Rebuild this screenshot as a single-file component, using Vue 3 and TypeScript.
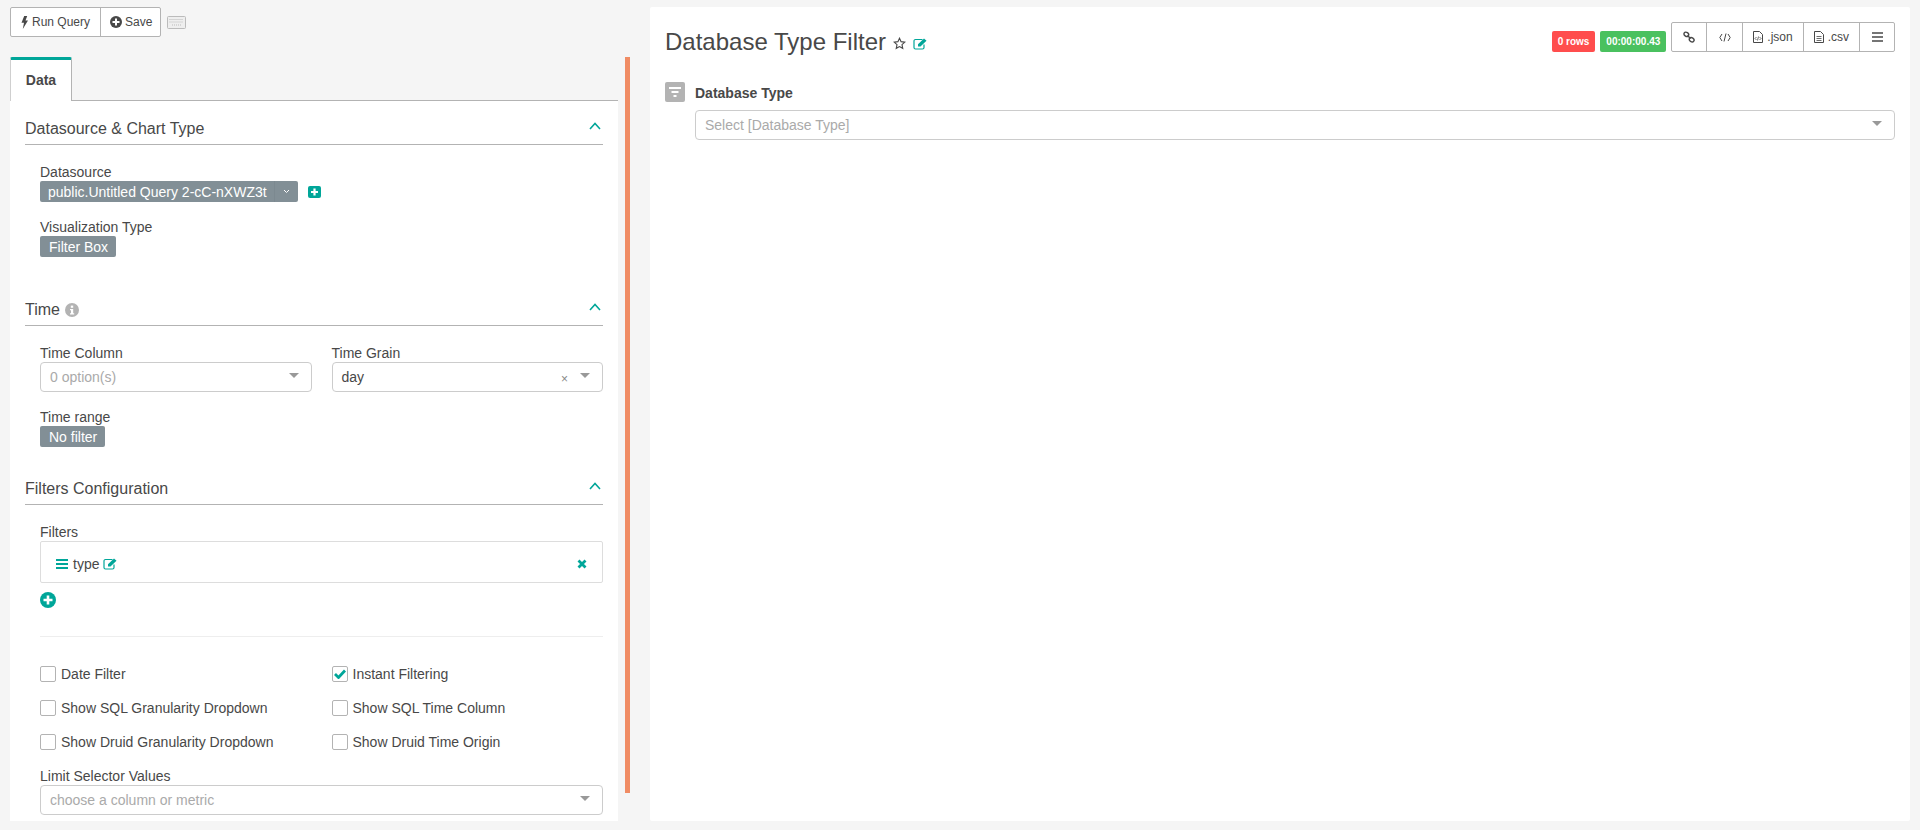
<script setup lang="ts">
const checks = [
  { label: 'Date Filter', checked: false },
  { label: 'Instant Filtering', checked: true },
  { label: 'Show SQL Granularity Dropdown', checked: false },
  { label: 'Show SQL Time Column', checked: false },
  { label: 'Show Druid Granularity Dropdown', checked: false },
  { label: 'Show Druid Time Origin', checked: false },
]
</script>

<template>
  <div class="page">
    <div class="left">
      <div class="toolbar">
        <div class="btn-group">
          <button class="btn run">
            <svg width="7" height="13" viewBox="0 0 7 13"><path d="M3.200 0H6.200L4.500 4.500H7L1.800 13 3 6.800H.5z" fill="#484848" /></svg>
            Run Query
          </button>
          <button class="btn save">
            <svg width="12" height="12" viewBox="0 0 12 12"><circle cx="6" cy="6" r="6" fill="#484848" /><path d="M6 2.500v7M2.500 6h7" stroke="#fff" stroke-width="2" /></svg>
            Save
          </button>
        </div>
        <svg class="kbd" width="19" height="13" viewBox="0 0 19 13"><rect x=".5" y=".5" width="18" height="12" rx="1" fill="#eee" stroke="#bbb" /><path d="M2.500 3.500h14M2.500 6h14M5 9h9" stroke="#bbb" stroke-dasharray="1 1" /></svg>
      </div>
      <div class="control-wrap">
        <div class="panel">
          <div class="tabs"><div class="tab">Data</div></div>
          <div class="tab-body">
            <section>
              <header class="sec-head">
                <span>Datasource &amp; Chart Type</span>
                <svg class="chev" width="12" height="8" viewBox="0 0 12 8"><path d="M1 7l5-5.500L11 7" fill="none" stroke="#00a699" stroke-width="1.600" /></svg>
              </header>
              <div class="sec-body">
                <label class="lbl">Datasource</label>
                <div class="row-inline">
                  <span class="lab-tag wide">
                    <span>public.Untitled Query 2-cC-nXWZ3t</span>
                    <span class="tag-caret">
                      <svg width="7" height="5" viewBox="0 0 7 5"><path d="M1 1l2.500 2.500L6 1" fill="none" stroke="#fff" /></svg>
                    </span>
                  </span>
                  <svg class="plus-sq" width="13" height="12" viewBox="0 0 13 12"><rect width="13" height="12" rx="2" fill="#00a699" /><path d="M6.500 2.500v7M3 6h7" stroke="#fff" stroke-width="2.200" /></svg>
                </div>
                <label class="lbl second">Visualization Type</label>
                <span class="lab-tag">Filter Box</span>
              </div>
            </section>

            <section class="time-sec">
              <header class="sec-head">
                <span class="head-with-icon">Time
                  <svg width="14" height="14" viewBox="0 0 14 14"><circle cx="7" cy="7" r="7" fill="#b3b3b3" /><rect x="5.800" y="2.600" width="2.400" height="2.200" fill="#fff" /><path d="M5 6h3.200v4.200H9.200v1.200H5v-1.200h1V7.200H5z" fill="#fff" /></svg>
                </span>
                <svg class="chev" width="12" height="8" viewBox="0 0 12 8"><path d="M1 7l5-5.500L11 7" fill="none" stroke="#00a699" stroke-width="1.600" /></svg>
              </header>
              <div class="sec-body">
                <div class="two">
                  <div>
                    <label class="lbl">Time Column</label>
                    <div class="select"><span class="ph">0 option(s)</span><i class="caret"></i></div>
                  </div>
                  <div>
                    <label class="lbl">Time Grain</label>
                    <div class="select"><span>day</span><span class="clear">×</span><i class="caret"></i></div>
                  </div>
                </div>
                <label class="lbl third">Time range</label>
                <span class="lab-tag">No filter</span>
              </div>
            </section>

            <section class="filter-sec">
              <header class="sec-head">
                <span>Filters Configuration</span>
                <svg class="chev" width="12" height="8" viewBox="0 0 12 8"><path d="M1 7l5-5.500L11 7" fill="none" stroke="#00a699" stroke-width="1.600" /></svg>
              </header>
              <div class="sec-body">
                <label class="lbl">Filters</label>
                <div class="filter-row">
                  <svg width="12" height="10" viewBox="0 0 12 10"><path d="M0 1h12M0 5h12M0 9h12" stroke="#00a699" stroke-width="2" /></svg>
                  <span class="type">type</span>
                  <svg width="14" height="12" viewBox="0 0 14 12"><path d="M9.500 1.500H2.500A1.500 1.500 0 0 0 1 3v6.500A1.500 1.500 0 0 0 2.500 11h7A1.500 1.500 0 0 0 11 9.500V6.500" fill="none" stroke="#00a699" stroke-width="1.200" /><path d="M5 6.300L11 .5 13.500 2.800 7.500 8.500H5z" fill="#00a699" /></svg>
                  <svg class="x" width="10" height="10" viewBox="0 0 10 10"><path d="M1.500 1.500l7 7M8.500 1.500l-7 7" stroke="#00a699" stroke-width="2.800" /></svg>
                </div>
                <svg class="add" width="16" height="16" viewBox="0 0 16 16"><circle cx="8" cy="8" r="8" fill="#00a699" /><path d="M8 3.500v9M3.500 8h9" stroke="#fff" stroke-width="2.600" /></svg>
                <hr class="sep" />
                <div class="checks">
                  <div v-for="c in checks" :key="c.label" class="check">
                    <span class="box">
                      <svg v-if="c.checked" width="12" height="10" viewBox="0 0 12 10"><path d="M1 5l3.500 3.500L11 1.500" fill="none" stroke="#00a699" stroke-width="2.800" /></svg>
                    </span>
                    <span>{{ c.label }}</span>
                  </div>
                </div>
                <label class="lbl limit">Limit Selector Values</label>
                <div class="select"><span class="ph">choose a column or metric</span><i class="caret"></i></div>
              </div>
            </section>
          </div>
        </div>
        <div class="scrollbar"></div>
      </div>
    </div>

    <div class="right">
      <div class="chart-head">
        <h1 class="title">Database Type Filter</h1>
        <svg class="star" width="13" height="13" viewBox="0 0 14 14"><path d="M7 1.300l1.700 3.700 4 .5-3 2.700.8 4L7 10.300l-3.500 1.900.8-4-3-2.700 4-.5z" fill="none" stroke="#484848" stroke-width="1.200" /></svg>
        <svg class="edit" width="14" height="12" viewBox="0 0 14 12"><path d="M9.500 1.500H2.500A1.500 1.500 0 0 0 1 3v6.500A1.500 1.500 0 0 0 2.500 11h7A1.500 1.500 0 0 0 11 9.500V6.500" fill="none" stroke="#00a699" stroke-width="1.200" /><path d="M5 6.300L11 .5 13.500 2.800 7.500 8.500H5z" fill="#00a699" /></svg>
        <div class="head-right">
          <span class="badge red">0 rows</span>
          <span class="badge green">00:00:00.43</span>
          <div class="btn-group">
            <button class="btn sm">
              <svg width="12" height="12" viewBox="0 0 12 12"><g fill="none" stroke="#484848" stroke-width="1.400"><ellipse cx="3.300" cy="3.300" rx="2.500" ry="2" transform="rotate(35 3.300 3.300)" /><ellipse cx="8.700" cy="8.700" rx="2.500" ry="2" transform="rotate(35 8.700 8.700)" /><path d="M4.500 4.500l3 3" /></g></svg>
            </button>
            <button class="btn sm code">
              <svg width="12" height="9" viewBox="0 0 12 9"><path d="M3 1L.8 4.500 3 8M9 1l2.200 3.500L9 8M7 .5L5 8.500" fill="none" stroke="#484848" /></svg>
            </button>
            <button class="btn sm">
              <svg width="10" height="12" viewBox="0 0 10 12"><path d="M.5.500h6l3 3v8H.5z" fill="none" stroke="#484848" /><path d="M3.500 6L2 7.500 3.500 9M6.500 6L8 7.500 6.500 9M5.500 5.500l-1 4" fill="none" stroke="#484848" stroke-width=".8" /></svg>
              .json
            </button>
            <button class="btn sm">
              <svg width="10" height="12" viewBox="0 0 10 12"><path d="M.5.500h6l3 3v8H.5z" fill="none" stroke="#484848" /><path d="M2.500 5.500h5M2.500 7.500h5M2.500 9.500h5" stroke="#484848" stroke-width=".8" /></svg>
              .csv
            </button>
            <button class="btn sm menu">
              <svg width="11" height="10" viewBox="0 0 11 10"><path d="M0 1h11M0 5h11M0 9h11" stroke="#484848" stroke-width="1.600" /></svg>
            </button>
          </div>
        </div>
      </div>
      <div class="filter-box">
        <span class="filter-icon">
          <svg width="12" height="10" viewBox="0 0 12 10"><path d="M0 1h12M2.500 5h7M4.500 9h3" stroke="#fff" stroke-width="2" /></svg>
        </span>
        <div class="filter-main">
          <div class="filter-name">Database Type</div>
          <div class="select"><span class="ph">Select [Database Type]</span><i class="caret"></i></div>
        </div>
      </div>
    </div>
  </div>
</template>

<style>
html,
body {
  margin: 0;
  background: #f5f5f5;
}
</style>

<style scoped>
.page {
  display: flex;
  height: 830px;
  overflow: hidden;
  box-sizing: border-box;
  padding: 7px 0 9px 10px;
  background: #f5f5f5;
  font-family: "Liberation Sans", Arial, sans-serif;
  font-size: 14px;
  color: #484848;
}
.left {
  width: 620px;
  flex: none;
  display: flex;
  flex-direction: column;
}
.toolbar {
  display: flex;
  align-items: center;
  height: 30px;
  margin-bottom: 20px;
  flex: none;
}
.btn-group {
  display: inline-flex;
  border: 1px solid #b3b3b3;
  border-radius: 2px;
  background: #fff;
}
.btn {
  display: inline-flex;
  align-items: center;
  justify-content: center;
  gap: 4px;
  height: 28px;
  padding: 0 10px;
  border: 0;
  border-right: 1px solid #b3b3b3;
  background: transparent;
  color: #484848;
  font: inherit;
  font-size: 12px;
}
.btn:last-child {
  border-right: 0;
}
.save {
  gap: 3px;
  padding: 0 8px 0 9px;
}
.sm {
  min-width: 35px;
  box-sizing: border-box;
}
.code {
  min-width: 36px;
}
.menu {
  min-width: 34px;
}
.kbd {
  margin-left: 6px;
}
.control-wrap {
  flex: 1;
  display: flex;
  min-height: 0;
}
.panel {
  width: 608px;
  flex: none;
  display: flex;
  flex-direction: column;
}
.tabs {
  display: flex;
  flex: none;
  height: 43px;
  border-bottom: 1px solid #b3b3b3;
}
.tab {
  width: 62px;
  box-sizing: border-box;
  margin-bottom: -1px;
  border-top: 3px solid #00a699;
  border-left: 1px solid #cfcfcf;
  border-right: 1px solid #b3b3b3;
  border-radius: 2px 2px 0 0;
  background: #fff;
  font-weight: 700;
  text-align: center;
  line-height: 41px;
}
.tab-body {
  flex: 1;
  padding: 10px 15px 0;
  background: #fff;
}
.sec-head {
  display: flex;
  align-items: center;
  justify-content: space-between;
  height: 34px;
  box-sizing: border-box;
  padding-top: 2px;
  border-bottom: 1px solid #b3b3b3;
  font-size: 16px;
}
.head-with-icon {
  display: inline-flex;
  align-items: center;
  gap: 5px;
}
.chev {
  margin-top: -6px;
  margin-right: 2px;
}
.sec-body {
  padding: 18px 0 0 15px;
}
.lbl {
  display: block;
  line-height: 18px;
}
.second {
  margin-top: 16px;
}
.third {
  margin-top: 16px;
}
.limit {
  margin-top: 17px;
}
.row-inline {
  display: flex;
  align-items: center;
}
.lab-tag {
  display: inline-flex;
  align-items: center;
  height: 21px;
  padding: 0 8px 0 9px;
  border-radius: 2px;
  background: #828f96;
  color: #fff;
  white-space: nowrap;
}
.wide {
  width: 258px;
  box-sizing: border-box;
  padding: 0 0 0 8px;
  justify-content: space-between;
}
.tag-caret {
  display: flex;
  align-items: center;
  justify-content: center;
  width: 23px;
  height: 100%;
  border-left: 1px solid #7c8990;
}
.plus-sq {
  margin-left: 10px;
}
.time-sec {
  margin-top: 35px;
}
.filter-sec {
  margin-top: 24px;
}
.two {
  display: grid;
  grid-template-columns: 1fr 1fr;
  gap: 20px;
}
.select {
  display: flex;
  align-items: center;
  height: 30px;
  box-sizing: border-box;
  padding: 0 12px 0 9px;
  border: 1px solid #ccc;
  border-radius: 4px;
  background: #fff;
}
.ph {
  color: #aaa;
}
.clear {
  margin-left: auto;
  margin-right: 12px;
  margin-top: 4px;
  color: #888;
  font-size: 12px;
}
.caret {
  margin-left: auto;
  margin-top: -4px;
  width: 0;
  height: 0;
  border: 5px solid transparent;
  border-top-color: #999;
  border-bottom: 0;
}
.clear + .caret {
  margin-left: 0;
}
.filter-row {
  display: flex;
  align-items: center;
  gap: 4px;
  height: 42px;
  box-sizing: border-box;
  padding: 3px 15px 0;
  border: 1px solid #ddd;
  border-radius: 2px;
}
.type {
  margin-left: 1px;
}
.x {
  margin-left: auto;
}
.add {
  display: block;
  margin-top: 9px;
}
.sep {
  height: 1px;
  margin: 28px 0 29px;
  border: 0;
  background: #eee;
}
.checks {
  display: grid;
  grid-template-columns: 1fr 1fr;
  column-gap: 20px;
  row-gap: 18px;
}
.check {
  display: flex;
  align-items: center;
  gap: 5px;
  height: 16px;
}
.box {
  display: flex;
  align-items: center;
  justify-content: center;
  flex: none;
  width: 16px;
  height: 16px;
  box-sizing: border-box;
  border: 1px solid #b3b3b3;
  border-radius: 2px;
}
.scrollbar {
  flex: none;
  width: 5px;
  height: 736px;
  margin-left: 7px;
  background: #f08c64;
}
.right {
  width: 1260px;
  flex: none;
  margin-left: 20px;
  box-sizing: border-box;
  padding: 15px;
  border-radius: 2px;
  background: #fff;
}
.chart-head {
  display: flex;
  align-items: center;
  height: 30px;
}
.title {
  margin: 9px 0 0;
  font-size: 24px;
  font-weight: 400;
  color: #484848;
}
.star {
  margin: 13px 0 0 7px;
}
.edit {
  margin: 13px 0 0 7px;
}
.head-right {
  display: flex;
  align-items: center;
  gap: 5px;
  margin-left: auto;
}
.badge {
  display: inline-flex;
  align-items: center;
  height: 21px;
  margin-top: 8px;
  padding: 0 6px;
  border-radius: 2px;
  color: #fff;
  font-size: 10px;
  font-weight: 700;
}
.red {
  background: #ff4d4d;
}
.green {
  background: #4ac15f;
}
.filter-box {
  display: flex;
  gap: 10px;
  margin-top: 30px;
}
.filter-icon {
  display: flex;
  align-items: center;
  justify-content: center;
  flex: none;
  width: 20px;
  height: 20px;
  border-radius: 2px;
  background: #b3b3b3;
}
.filter-main {
  flex: 1;
}
.filter-name {
  margin-bottom: 6px;
  font-weight: 700;
  line-height: 22px;
}
</style>
